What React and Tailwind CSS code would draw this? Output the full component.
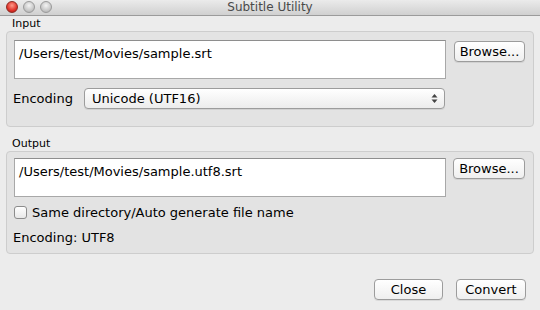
import React from "react";

const font = { fontFamily: '"Lucida Grande", "DejaVu Sans", sans-serif' };

function Btn({ children, w }) {
  return (
    <div
      className={`h-[21px] ${w} flex items-center justify-center rounded-[4px] border border-[#9c9c9c] bg-gradient-to-b from-[#ffffff] to-[#efefef] text-[13px] text-black shadow-[0_1px_0_rgba(0,0,0,0.08)]`}
    >
      {children}
    </div>
  );
}

export default function App() {
  return (
    <div
      className="w-[540px] h-[310px] bg-[#ececec] flex flex-col overflow-hidden"
      style={font}
    >
      {/* Title bar */}
      <div className="h-[16px] shrink-0 relative flex items-center justify-center bg-gradient-to-b from-[#ebebeb] to-[#d0d0d0] border-b border-[#9b9b9b]">
        <div className="absolute left-[6px] top-[1px] flex gap-[5px]">
          <div className="w-[12px] h-[12px] rounded-full bg-[radial-gradient(circle_at_50%_35%,#ff9a8a,#e0332a_60%,#a5160f)] border border-[#8e2a22]" />
          <div className="w-[12px] h-[12px] rounded-full bg-[radial-gradient(circle_at_50%_35%,#f4f4f4,#c8c8c8_60%,#a8a8a8)] border border-[#9a9a9a]" />
          <div className="w-[12px] h-[12px] rounded-full bg-[radial-gradient(circle_at_50%_35%,#f4f4f4,#c8c8c8_60%,#a8a8a8)] border border-[#9a9a9a]" />
        </div>
        <span className="text-[12px] leading-[15px] text-[#4a4a4a]">Subtitle Utility</span>
      </div>

      <div className="px-[6px] flex flex-col">
        {/* Input */}
        <div className="h-[15px] text-[11px] leading-[15px] pl-[6px] text-black">Input</div>
        <div className="h-[96px] rounded-[4px] border border-[#cdcdcd] bg-[#e3e3e3] pl-[7px] pr-[7px] pt-[8px] flex flex-col">
          <div className="flex gap-[8px]">
            <div className="w-[432px] h-[39px] bg-white border border-[#a8a8a8] border-t-[#8e8e8e] pl-[4px] pt-[5px] text-[13px] leading-[16px] text-black">
              /Users/test/Movies/sample.srt
            </div>
            <div className="pt-[1px]">
              <Btn w="w-[71px]">Browse...</Btn>
            </div>
          </div>
          <div className="flex items-center mt-[9px]">
            <div className="w-[71px] text-[13px] text-black -ml-[1px]">Encoding</div>
            <div className="w-[361px] h-[21px] rounded-[4px] border border-[#9c9c9c] bg-gradient-to-b from-[#ffffff] to-[#ececec] flex items-center pl-[7px] pr-[6px] text-[13px] text-black shadow-[0_1px_0_rgba(0,0,0,0.08)]">
              <span className="flex-1">Unicode (UTF16)</span>
              <svg width="7" height="11" viewBox="0 0 7 11">
                <path d="M3.5 1 L6.5 4.5 L0.5 4.5 Z" fill="#444" />
                <path d="M3.5 10 L6.5 6.5 L0.5 6.5 Z" fill="#444" />
              </svg>
            </div>
          </div>
        </div>

        {/* Output */}
        <div className="h-[15px] mt-[9px] text-[11px] leading-[15px] pl-[6px] text-black">Output</div>
        <div className="h-[103px] rounded-[4px] border border-[#cdcdcd] bg-[#e3e3e3] pl-[7px] pr-[7px] pt-[6px] flex flex-col">
          <div className="flex gap-[7px]">
            <div className="w-[432px] h-[39px] bg-white border border-[#a8a8a8] border-t-[#8e8e8e] pl-[4px] pt-[5px] text-[13px] leading-[16px] text-black">
              /Users/test/Movies/sample.utf8.srt
            </div>
            <Btn w="w-[72px]">Browse...</Btn>
          </div>
          <div className="flex items-center mt-[9px] h-[13px]">
            <div className="w-[13px] h-[13px] rounded-[3px] border border-[#8c8c8c] bg-gradient-to-b from-[#ffffff] to-[#e8e8e8]" />
            <span className="ml-[5px] text-[13px] text-black">Same directory/Auto generate file name</span>
          </div>
          <div className="mt-[11px] text-[13px] leading-[16px] text-black -ml-[1px]">Encoding: UTF8</div>
        </div>

        {/* Bottom buttons */}
        <div className="flex justify-end gap-[13px] mt-[25px] pr-[8px]">
          <Btn w="w-[69px]">Close</Btn>
          <Btn w="w-[70px]">Convert</Btn>
        </div>
      </div>
    </div>
  );
}
